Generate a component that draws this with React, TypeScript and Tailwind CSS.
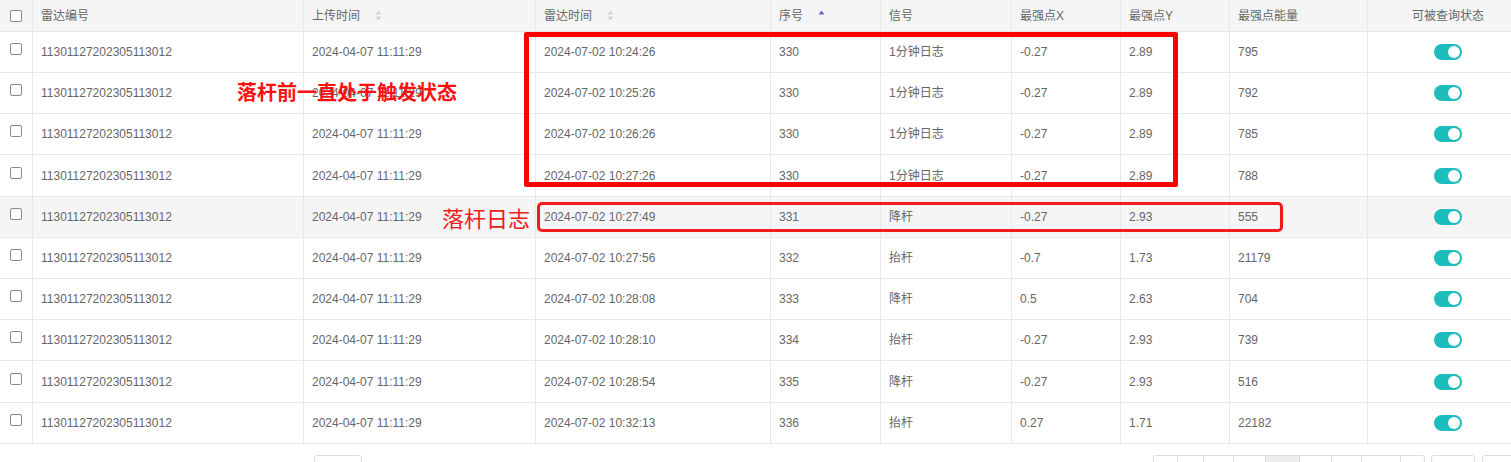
import React from 'react';

type Row = {
  id: string;
  upload: string;
  radar: string;
  seq: number;
  signal: string;
  x: string;
  y: string;
  energy: string;
};

const rows: Row[] = [
  { id: '1130112720230511​3012', upload: '2024-04-07 11:11:29', radar: '2024-07-02 10:24:26', seq: 330, signal: '1分钟日志', x: '-0.27', y: '2.89', energy: '795' },
  { id: '1130112720230511​3012', upload: '2024-04-07 11:11:29', radar: '2024-07-02 10:25:26', seq: 330, signal: '1分钟日志', x: '-0.27', y: '2.89', energy: '792' },
  { id: '1130112720230511​3012', upload: '2024-04-07 11:11:29', radar: '2024-07-02 10:26:26', seq: 330, signal: '1分钟日志', x: '-0.27', y: '2.89', energy: '785' },
  { id: '1130112720230511​3012', upload: '2024-04-07 11:11:29', radar: '2024-07-02 10:27:26', seq: 330, signal: '1分钟日志', x: '-0.27', y: '2.89', energy: '788' },
  { id: '1130112720230511​3012', upload: '2024-04-07 11:11:29', radar: '2024-07-02 10:27:49', seq: 331, signal: '降杆', x: '-0.27', y: '2.93', energy: '555' },
  { id: '1130112720230511​3012', upload: '2024-04-07 11:11:29', radar: '2024-07-02 10:27:56', seq: 332, signal: '抬杆', x: '-0.7', y: '1.73', energy: '21179' },
  { id: '1130112720230511​3012', upload: '2024-04-07 11:11:29', radar: '2024-07-02 10:28:08', seq: 333, signal: '降杆', x: '0.5', y: '2.63', energy: '704' },
  { id: '1130112720230511​3012', upload: '2024-04-07 11:11:29', radar: '2024-07-02 10:28:10', seq: 334, signal: '抬杆', x: '-0.27', y: '2.93', energy: '739' },
  { id: '1130112720230511​3012', upload: '2024-04-07 11:11:29', radar: '2024-07-02 10:28:54', seq: 335, signal: '降杆', x: '-0.27', y: '2.93', energy: '516' },
  { id: '1130112720230511​3012', upload: '2024-04-07 11:11:29', radar: '2024-07-02 10:32:13', seq: 336, signal: '抬杆', x: '0.27', y: '1.71', energy: '22182' },
];

const cols = 'grid grid-cols-[33px_271px_232px_235px_110px_131px_109px_109px_138px_160px]';
const cell = 'flex items-center px-2 border-r border-[#e8e8e8] truncate';

function SortIcon({ active }: { active?: boolean }) {
  return (
    <svg width="7" height="11" viewBox="0 0 7 11" className="ml-[15px]">
      <path d="M0.5 4.5 L3.5 0.5 L6.5 4.5 Z" fill={active ? '#5c6ac4' : '#d4d4d4'} />
      {!active && <path d="M0.5 6.5 L3.5 10.5 L6.5 6.5 Z" fill="#d4d4d4" />}
    </svg>
  );
}

function Checkbox() {
  return <div className="w-[12px] h-[12px] border border-[#8a8a8a] rounded-[2px] bg-white" />;
}

function Toggle() {
  return (
    <div className="w-[28px] h-[16px] rounded-full bg-[#1dbdbd] flex items-center justify-end pr-[2px]">
      <div className="w-[12px] h-[12px] rounded-full bg-white" />
    </div>
  );
}

export default function App() {
  const pages = [
    { t: '‹', w: 'w-[24px]' },
    { t: '1', w: 'w-[26px]' },
    { t: '...', w: 'w-[30px]' },
    { t: '46', w: 'w-[32px]' },
    { t: '47', w: 'w-[34px]', active: true },
    { t: '48', w: 'w-[32px]' },
    { t: '...', w: 'w-[30px]' },
    { t: '233', w: 'w-[39px]' },
    { t: '›', w: 'w-[23px]' },
  ];

  return (
    <div className="relative w-[1511px] h-[462px] overflow-hidden bg-white text-[12px] text-[#666] font-['Liberation_Sans','Noto_Sans_CJK_SC',sans-serif]">
      {/* Table */}
      <div className="w-[1528px]">
        <div className={`${cols} h-[32px] bg-[#f5f5f5] border-b border-[#e8e8e8]`}>
          <div className="flex items-center justify-center border-r border-[#e8e8e8]">
            <Checkbox />
          </div>
          <div className={cell}>雷达编号</div>
          <div className={cell}>上传时间<SortIcon /></div>
          <div className={cell}>雷达时间<SortIcon /></div>
          <div className={cell}>序号<SortIcon active /></div>
          <div className={cell}>信号</div>
          <div className={cell}>最强点X</div>
          <div className={cell}>最强点Y</div>
          <div className={cell}>最强点能量</div>
          <div className="flex items-center justify-center">可被查询状态</div>
        </div>

        {rows.map((r, i) => (
          <div key={i} className={`${cols} ${i % 5 === 3 ? 'h-[42px]' : 'h-[41px]'} border-b border-[#e8e8e8] ${i === 4 ? 'bg-[#f5f5f5]' : 'bg-white'}`}>
            <div className="flex items-center justify-center border-r border-[#e8e8e8] pb-[6px]">
              <Checkbox />
            </div>
            <div className={cell}>{r.id}</div>
            <div className={cell}>{r.upload}</div>
            <div className={cell}>{r.radar}</div>
            <div className={cell}>{r.seq}</div>
            <div className={cell}>{r.signal}</div>
            <div className={cell}>{r.x}</div>
            <div className={cell}>{r.y}</div>
            <div className={cell}>{r.energy}</div>
            <div className="flex items-center justify-center pr-[1px]">
              <Toggle />
            </div>
          </div>
        ))}
      </div>

      {/* Footer / pagination */}
      <div className="flex items-start pt-[11px]">
        <div className="shrink-0 ml-[314px] w-[48px] h-[26px] border border-[#dcdcdc] rounded-[3px]" />
        <div className="shrink-0 ml-[791px] flex h-[26px] border border-[#dcdcdc] rounded-[3px]">
          {pages.map((p, i) => (
            <div
              key={i}
              className={`${p.w} shrink-0 flex items-center justify-center pt-[8px] ${i < pages.length - 1 ? 'border-r border-[#dcdcdc]' : ''} ${p.active ? 'bg-[#eeeeee]' : ''}`}
            >
              {p.t}
            </div>
          ))}
        </div>
        <div className="shrink-0 ml-[6px] w-[44px] h-[26px] border border-[#dcdcdc] rounded-[3px]" />
        <div className="shrink-0 ml-[7px] w-[44px] h-[26px] border border-[#dcdcdc] rounded-[3px]" />
      </div>

      {/* Annotations */}
      <div className="absolute left-[524px] top-[32px] w-[654px] h-[155px] border-[5px] border-[#ff0000] rounded-[2px]" />
      <div className="absolute left-[537px] top-[202px] w-[746px] h-[30px] border-[3px] border-[#f01c1c] rounded-[5px]" />
      <div className="absolute left-[237px] top-[79px] text-[20px] font-bold leading-[26px] text-[#ff1010] font-['Noto_Sans_CJK_SC',sans-serif]">
        落杆前一直处于触发状态
      </div>
      <div className="absolute left-[442px] top-[203px] text-[22px] leading-[28px] text-[#ec2020] font-['Noto_Sans_CJK_SC',sans-serif]">
        落杆日志
      </div>
    </div>
  );
}
